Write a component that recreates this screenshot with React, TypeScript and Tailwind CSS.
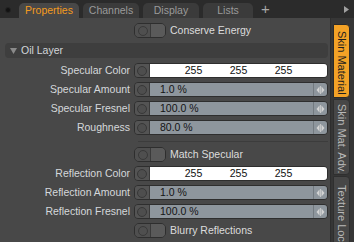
import React from "react";

const Knob = () => (
  <div className="w-[15px] h-full flex items-center justify-center bg-[#545454] border-r border-[#3a3a3a]">
    <div className="w-[10px] h-[10px] rounded-full border border-[#383838] bg-[#4e4e4e]" />
  </div>
);

const Arrows = () => (
  <svg width="9" height="8" viewBox="0 0 9 8">
    <path d="M3.5 0.5 L0.5 4 L3.5 7.5 Z" fill="#d4d4d4" />
    <path d="M5.5 0.5 L8.5 4 L5.5 7.5 Z" fill="#d4d4d4" />
    <rect x="4.1" y="0" width="0.8" height="8" fill="#d4d4d4" />
  </svg>
);

const Row = ({ label, children, className = "" }: { label: string; children: React.ReactNode; className?: string }) => (
  <div className={`flex h-[15px] items-center ${className}`}>
    <div className="w-[130px] text-right text-[#d5d8db]">{label}</div>
    <div className="ml-[4px] flex-1 h-full flex rounded-[4px] border border-[#2e2e2e] overflow-hidden">
      <Knob />
      {children}
    </div>
  </div>
);

const ColorRow = ({ label, className = "" }: { label: string; className?: string }) => (
  <Row label={label} className={className}>
    <div className="flex-1 h-full bg-white flex items-center pl-[21px] text-[#111]">
      <span className="w-[45px] text-center">255</span>
      <span className="w-[45px] text-center">255</span>
      <span className="w-[45px] text-center">255</span>
    </div>
  </Row>
);

const SliderRow = ({ label, value }: { label: string; value: string }) => (
  <Row label={label}>
    <div className="flex-1 h-full bg-[#8e969d] flex items-center pl-[10px] text-[#141414]">{value}</div>
    <div className="w-[14px] h-full bg-[#8e969d] border-l border-[#737a80] flex items-center justify-center">
      <Arrows />
    </div>
  </Row>
);

const Toggle = ({ label }: { label: string }) => (
  <div className="flex h-[15px] items-center">
    <div className="ml-[134px] w-[32px] h-full flex rounded-[5px] border border-[#2e2e2e] overflow-hidden">
      <div className="w-[16px] flex items-center justify-center bg-[#4f4f4f] border-r border-[#3a3a3a]">
        <div className="w-[10px] h-[10px] rounded-full border border-[#393939]" />
      </div>
      <div className="flex-1 bg-[#5a5a5a]" />
    </div>
    <span className="ml-[4px] text-[#dcdcdc]">{label}</span>
  </div>
);

const Tab = ({ label, active = false, w }: { label: string; active?: boolean; w: string }) => (
  <div
    className={`${w} h-[15px] rounded-t-[5px] flex items-center justify-center ${
      active ? "bg-[#484848] text-[#f39b1e]" : "bg-[#3b3b3b] text-[#9a9a9a]"
    }`}
  >
    {label}
  </div>
);

const SideTab = ({ label, active = false, h }: { label: string; active?: boolean; h: string }) => (
  <div
    className={`${h} w-[17px] shrink-0 rounded-r-[4px] flex justify-center pt-[4px] [writing-mode:vertical-rl] text-[11px] overflow-hidden whitespace-nowrap border ${
      active ? "bg-[#f3a226] text-[#1e1e1e] border-[#2a2a2a]" : "bg-[#474747] text-[#b8b8b8] border-[#2f2f2f]"
    }`}
  >
    {label}
  </div>
);

export default function App() {
  return (
    <div className="w-[354px] h-[242px] flex flex-col bg-[#484848] font-['Liberation_Sans',Arial,sans-serif] text-[10.5px] leading-[15px] overflow-hidden">
      <div className="h-[18px] shrink-0 bg-[#2b2b2b] flex items-end">
        <div className="w-[19px] self-stretch pl-[5px] pt-[7px]">
          <div className="w-[6px] h-[6px] rounded-full bg-[#121212] border border-[#232323]" />
        </div>
        <Tab label="Properties" active w="w-[60px]" />
        <div className="ml-[4px]">
          <Tab label="Channels" w="w-[56px]" />
        </div>
        <div className="ml-[4px]">
          <Tab label="Display" w="w-[56px]" />
        </div>
        <div className="ml-[4px]">
          <Tab label="Lists" w="w-[50px]" />
        </div>
        <div className="ml-[8px] self-stretch flex items-center text-[#a8a8a8] text-[15px] pb-[1px]">+</div>
        <div className="ml-auto mr-[5px] self-stretch flex items-center">
          <svg width="5" height="7" viewBox="0 0 5 7">
            <path d="M0 0 L5 3.5 L0 7 Z" fill="#a0a0a0" />
          </svg>
        </div>
      </div>
      <div className="flex flex-1 min-h-0">
        <div className="w-[330px] flex flex-col gap-[4px] pt-[5px] pr-[2px]">
          <Toggle label="Conserve Energy" />
          <div className="mt-[1px] ml-[5px] h-[15px] rounded-[4px] bg-[#3e3e3e] flex items-center">
            <svg width="7" height="6" viewBox="0 0 7 6" className="ml-[5px]">
              <path d="M0 0 L7 0 L3.5 6 Z" fill="#8a8a8a" />
            </svg>
            <span className="ml-[4px] text-[#d2d6da]">Oil Layer</span>
          </div>
          <ColorRow label="Specular Color" className="mt-[1px]" />
          <SliderRow label="Specular Amount" value="1.0 %" />
          <SliderRow label="Specular Fresnel" value="100.0 %" />
          <SliderRow label="Roughness" value="80.0 %" />
          <div className="h-px mt-[2px] mb-[1px] ml-[138px] bg-[#3c3c3c]" />
          <Toggle label="Match Specular" />
          <ColorRow label="Reflection Color" />
          <SliderRow label="Reflection Amount" value="1.0 %" />
          <SliderRow label="Reflection Fresnel" value="100.0 %" />
          <Toggle label="Blurry Reflections" />
        </div>
        <div className="flex-1 bg-[#363636] border-l border-[#2e2e2e] pl-[2px] pt-[6px] flex flex-col gap-[1px] overflow-hidden">
          <SideTab label="Skin Material" active h="h-[74px]" />
          <SideTab label="Skin Mat. Adv." h="h-[76px]" />
          <SideTab label="Texture Locator" h="h-[90px]" />
        </div>
      </div>
    </div>
  );
}
